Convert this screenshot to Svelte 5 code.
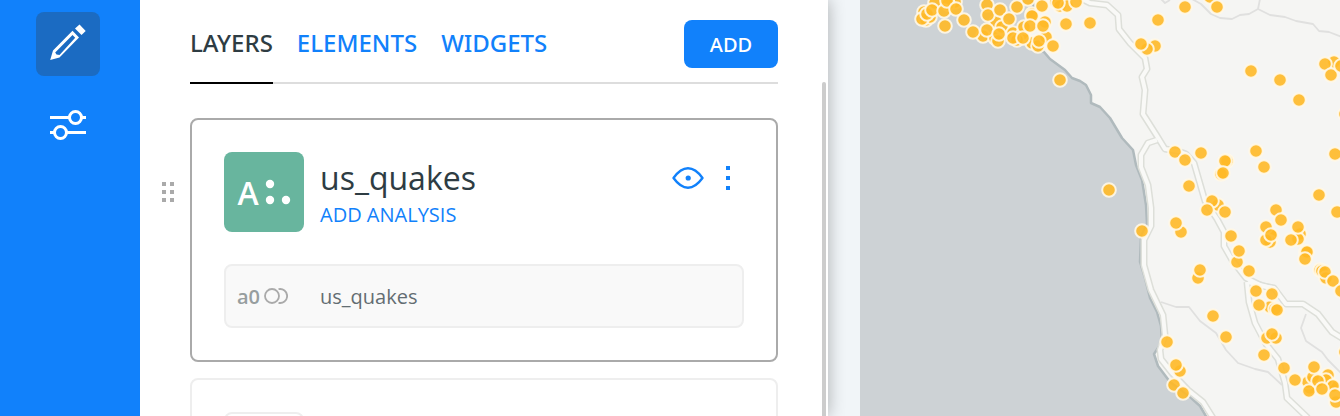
<script>
  let activeTab = $state('LAYERS');
  const tabs = ['LAYERS', 'ELEMENTS', 'WIDGETS'];

  const main = 'M1080-2 L1090 3 L1107 5 L1118 15 L1119 29 L1130 43 L1138 51 L1145 58 L1147 69 L1142 77 L1145 90 L1143 114 L1157 136 L1165 149 L1178 151 L1186 154 L1194 163 L1205 201 L1217 219 L1224 232 L1224 246 L1232 260 L1246 278 L1262 286 L1274 288 L1286 304 L1303 304 L1318 314 L1332 332 L1342 338';
  const branch = 'M1157 140 L1148 143 L1141 155 L1141 167 L1148 185 L1151 208 L1151 226 L1144 240 L1144 265 L1151 290 L1163 315 L1165 335 L1160 350 L1161 359 L1172 373 L1188 390 L1203 402 L1213 418';
  const inner = 'M1247 282 L1249 302 L1255 323 L1266 344 L1278 359 L1285 383 L1287 398 L1308 418';
  const roads = [main, branch, inner, 'M1248 282 L1260 285 L1272 288'];

  const coast = 'M1032-2 L1034 8 L1028 26 L1020 40 L1030 47 L1044 52 L1050 59 L1065 70 L1072 78 L1080 81 L1086 85 L1091 95 L1091 103 L1100 107 L1110 118 L1122 138 L1133 150 L1136 165 L1142 180 L1146 205 L1147 224 L1141 236 L1140 262 L1145 278 L1150 298 L1157 312 L1161 326 L1162 342 L1154 354 L1158 366 L1170 382 L1189 396 L1200 406 L1207 418';

  // Quakes hidden below the top layer; mostly their halos remain visible
  const lower = [
    [924,12],[926,20],[930,17],[935,3],[955,2],[948,4],[922,19],[983,36],[996,22],[995,38],
    [1002,27],[998,41],[1013,33],[1023,34],[1032,43],[1038,46],[1046,37],[1045,22],[1032,14],
    [1056,2],[1060,6],[1155,46],[1147,49],[1210,-3],[1334,62],[1227,161],[1221,174],[1181,232],
    [1198,278],[1272,236],[1270,242],[1266,240],[1300,234],[1298,239],[1306,252],[1320,270],
    [1322,271],[1326,278],[1237,262],[1270,307],[1275,309],[1267,338],[1276,338],[1180,371],
    [1310,388],[1308,382],[1319,382],[1328,375],[1332,387],[1336,402],[1326,380],[1313,377],
    [1218,205],[1024,27],[1017,40]
  ];
  const upper = [
    [927,14],[932,10],[944,11],[947,1],[956,9],[945,26],[964,20],[973,32],[987,5],[988,15],
    [1000,10],[1009,19],[987,30],[999,34],[1017,7],[1028,-1],[1032,16],[1030,26],[1043,26],
    [1013,38],[1023,38],[1039,41],[1053,46],[1042,6],[1066,24],[1090,23],[1060,80],[1067,6],
    [1076,2],[1058,3],[1158,20],[1185,7],[1217,7],[1141,44],[1251,71],[1280,80],[1299,100],
    [1325,64],[1331,75],[1341,66],[1345,114],[1175,152],[1185,160],[1201,153],[1225,161],
    [1223,173],[1256,151],[1264,167],[1335,154],[1189,186],[1109,190],[1319,195],[1337,212],
    [1212,201],[1207,210],[1225,212],[1276,210],[1281,220],[1142,231],[1176,223],[1231,236],
    [1266,227],[1271,235],[1298,227],[1291,240],[1239,251],[1307,252],[1305,259],[1249,271],
    [1200,270],[1325,272],[1333,281],[1341,291],[1256,291],[1272,294],[1259,305],[1277,310],
    [1213,316],[1272,334],[1226,337],[1264,355],[1167,342],[1345,352],[1284,368],[1314,367],
    [1295,380],[1176,365],[1174,385],[1183,393],[1309,391],[1318,381],[1333,386],[1322,389],
    [1335,395]
  ];
</script>

<div class="builder">
  <nav class="rail" aria-label="Main">
    <button class="tool selected" aria-label="Edit">
      <svg width="40" height="40" viewBox="0 0 40 40" aria-hidden="true">
        <path d="M2.200 36 L5 26.500 L24.500 6.800 L31 13.500 L11.500 33.500Z M7.200 28.500 L8.500 30.500 L11.500 31 L27.200 13.800 L24.500 11Z" fill="#fff" fill-rule="evenodd" />
        <path d="M27 4.500 L31.500 .500 L37.700 7 L33.500 11Z" fill="#fff" />
      </svg>
    </button>
    <button class="tool" aria-label="Settings">
      <svg width="36" height="32" viewBox="0 0 36 32" fill="none" stroke="#fff" stroke-width="3" aria-hidden="true">
        <path d="M0 8.500H19M32 8.500H36M0 23.500H4M17 23.500H36" />
        <circle cx="25.500" cy="8.500" r="6" />
        <circle cx="10.500" cy="23.500" r="6" />
      </svg>
    </button>
  </nav>

  <section class="panel">
    <header class="top">
      <div class="tabs" role="tablist">
        {#each tabs as tab}
          <button role="tab" class="tab" class:active={activeTab === tab} aria-selected={activeTab === tab} onclick={() => (activeTab = tab)}>{tab}</button>
        {/each}
      </div>
      <button class="add">ADD</button>
    </header>
    <div class="scroller">
      <ul class="layers">
        <li class="row">
          <button class="handle" aria-label="Reorder layer">
            <svg width="12" height="20" viewBox="0 0 12 20" fill="#aaa" aria-hidden="true"><path d="M0 0h4v4H0zM8 0h4v4H8zM0 8h4v4H0zM8 8h4v4H8zM0 16h4v4H0zM8 16h4v4H8z" /></svg>
          </button>
          <article class="card current">
            <div class="head">
              <div class="badge">
                <span>A</span>
                <svg width="26" height="26" viewBox="0 0 26 26" fill="#fff" aria-hidden="true"><circle cx="5" cy="5" r="4.200" /><circle cx="5" cy="21" r="4.200" /><circle cx="21" cy="21" r="4.200" /></svg>
              </div>
              <div class="title">
                <h2>us_quakes</h2>
                <a href="#analysis">ADD ANALYSIS</a>
              </div>
              <div class="actions">
                <button aria-label="Toggle visibility">
                  <svg width="32" height="24" viewBox="0 0 32 24" aria-hidden="true"><path d="M1.500 12 Q8.500 2.300 16 2.300 Q23.500 2.300 30.500 12 Q23.500 21.700 16 21.700 Q8.500 21.700 1.500 12Z" fill="none" stroke="#1181fb" stroke-width="2.400" stroke-linejoin="round" /><circle cx="16.200" cy="12" r="2.600" fill="#1181fb" /></svg>
                </button>
                <button aria-label="Layer options">
                  <svg width="4" height="24" viewBox="0 0 4 24" fill="#1181fb" aria-hidden="true"><path d="M0 0h4v4H0zM0 10h4v4H0zM0 20h4v4H0z" /></svg>
                </button>
              </div>
            </div>
            <div class="source">
              <div class="node">
                <b>a0</b>
                <svg width="24" height="18" viewBox="0 0 24 18" fill="none" stroke="#aaa" stroke-width="1.800" aria-hidden="true"><circle cx="8" cy="9" r="7" /><path d="M14.500 2.200 A7 7 0 1 1 14.500 15.800" /></svg>
              </div>
              <span>us_quakes</span>
            </div>
          </article>
        </li>
        <li class="row">
          <article class="card">
            <div class="head"><div class="badge blank"></div></div>
          </article>
        </li>
      </ul>
      <div class="thumb"></div>
    </div>
  </section>

  <main class="map">
    <svg viewBox="860 0 480 416" preserveAspectRatio="xMinYMin slice" role="img" aria-label="Earthquake map">
      <path d="{coast} L1500 418 L1500 -2Z" fill="#f5f5f3" />
      <path d={coast} fill="none" stroke="#b0babd" stroke-width="2.500" stroke-linejoin="round" />
      <g fill="none" stroke="#e0e0df" stroke-width="1.800" stroke-linejoin="round">
        <path d="M1161 -1 L1165 3 L1170 0 M1192-1 L1201 4 L1211 14 L1220 18 L1232 19 L1240 15 L1249 14 L1258 9 L1260 -1 M1258 9 L1270 15 L1285 17 L1296 21 L1313 24 L1319 31 L1329 32 L1342 37" />
        <path d="M1161 302 L1176 307 L1189 307 L1200 321 L1216 333 L1226 350 L1238 363 L1255 369 L1268 372 L1282 385 M1306 314 L1301 328 L1306 341 L1322 352 L1328 360 L1342 374" />
      </g>
      <g fill="none" stroke-linejoin="round">
        {#each roads as road}<path d={road} stroke="#dddfd9" stroke-width="7" />{/each}
        {#each roads as road}<path d={road} stroke="#f9f9f7" stroke-width="4" />{/each}
      </g>
      {#each [...lower, ...upper] as [x, y]}
        <circle cx={x} cy={y} r="6.800" fill="#ffb927" fill-opacity=".9" stroke="#fff8e9" stroke-opacity=".9" stroke-width="2" />
      {/each}
    </svg>
  </main>
</div>

<style>
  :global(body) { margin: 0; }
  * { box-sizing: border-box; }
  button { border: 0; padding: 0; margin: 0; background: none; font: inherit; color: inherit; cursor: pointer; }
  svg { display: block; }
  .builder {
    display: flex;
    height: 100vh;
    overflow: hidden;
    background: #f1f5f8;
    color: #2e3c43;
    font-family: "Open Sans", "Noto Sans", sans-serif;
  }
  .rail {
    flex: 0 0 140px;
    display: flex;
    flex-direction: column;
    align-items: center;
    gap: 17px;
    padding: 12px 4px 0 0;
    background: #1181fb;
  }
  .tool {
    display: grid;
    place-items: center;
    width: 64px;
    height: 64px;
    border-radius: 8px;
  }
  .tool.selected { background: #1b6bc2; }
  .panel {
    flex: 0 0 688px;
    display: flex;
    flex-direction: column;
    background: #fff;
    box-shadow: 0 0 16px rgba(0, 0, 0, .3);
    clip-path: inset(0 -32px 0 0);
  }
  .top {
    display: flex;
    justify-content: space-between;
    align-items: flex-start;
    margin: 0 50px;
    box-shadow: inset 0 -2px #ddd;
  }
  .tabs { display: flex; gap: 24px; }
  .tab {
    padding: 27px 0 23px;
    border-bottom: 2px solid transparent;
    font-family: "Noto Sans", "Open Sans", sans-serif;
    font-size: 24px;
    font-weight: 500;
    line-height: 32px;
    color: #1181fb;
  }
  .tab.active { color: #2e3c43; border-color: #000; }
  .add {
    width: 94px;
    height: 48px;
    margin-top: 20px;
    border-radius: 8px;
    background: #1181fb;
    color: #fff;
    font-family: "Noto Sans", "Open Sans", sans-serif;
    font-size: 20px;
    font-weight: 500;
  }
  .scroller { flex: 1; min-height: 0; display: flex; padding-right: 2px; margin-top: -2px; }
  .layers {
    flex: 1;
    min-width: 0;
    display: flex;
    flex-direction: column;
    gap: 16px;
    margin: 0;
    padding: 36px 44px 0 0;
    list-style: none;
  }
  .thumb { width: 4px; border-radius: 2px 2px 0 0; background: #ccc; }
  .row { display: grid; grid-template-columns: 50px 1fr; }
  .handle { justify-self: end; align-self: start; margin: 64px 16px 0 0; }
  .card { grid-column: 2; padding: 32px; border: 2px solid #eee; border-radius: 8px; }
  .card.current { border-color: #aaa; }
  .head { display: flex; gap: 16px; }
  .badge {
    width: 80px;
    height: 80px;
    display: flex;
    align-items: center;
    justify-content: center;
    gap: 6px;
    border-radius: 8px;
    background: #68b59e;
    color: #fff;
    font-size: 32px;
    font-weight: 600;
  }
  .badge.blank { background: #fff; border: 2px solid #eee; }
  .title { flex: 1; padding-top: 4px; }
  h2 { margin: 0; font-size: 32px; font-weight: 400; line-height: 44px; }
  a { display: block; color: #1181fb; font-size: 20px; line-height: 30px; text-decoration: none; }
  .actions { display: flex; align-items: flex-start; gap: 22px; padding: 14px 14px 0 0; }
  .source {
    display: flex;
    align-items: center;
    height: 64px;
    margin-top: 32px;
    border: 2px solid #eee;
    border-radius: 8px;
    background: #f9f9f9;
    color: #636d72;
    font-size: 20px;
  }
  .node { display: flex; align-items: center; gap: 4px; width: 94px; padding-left: 11px; color: #979e9f; }
  .node b { font-weight: 600; }
  .map { flex: 1; min-width: 0; margin-left: 32px; background: #cdd2d5; overflow: hidden; }
  .map svg { width: 100%; height: 100%; }
</style>
